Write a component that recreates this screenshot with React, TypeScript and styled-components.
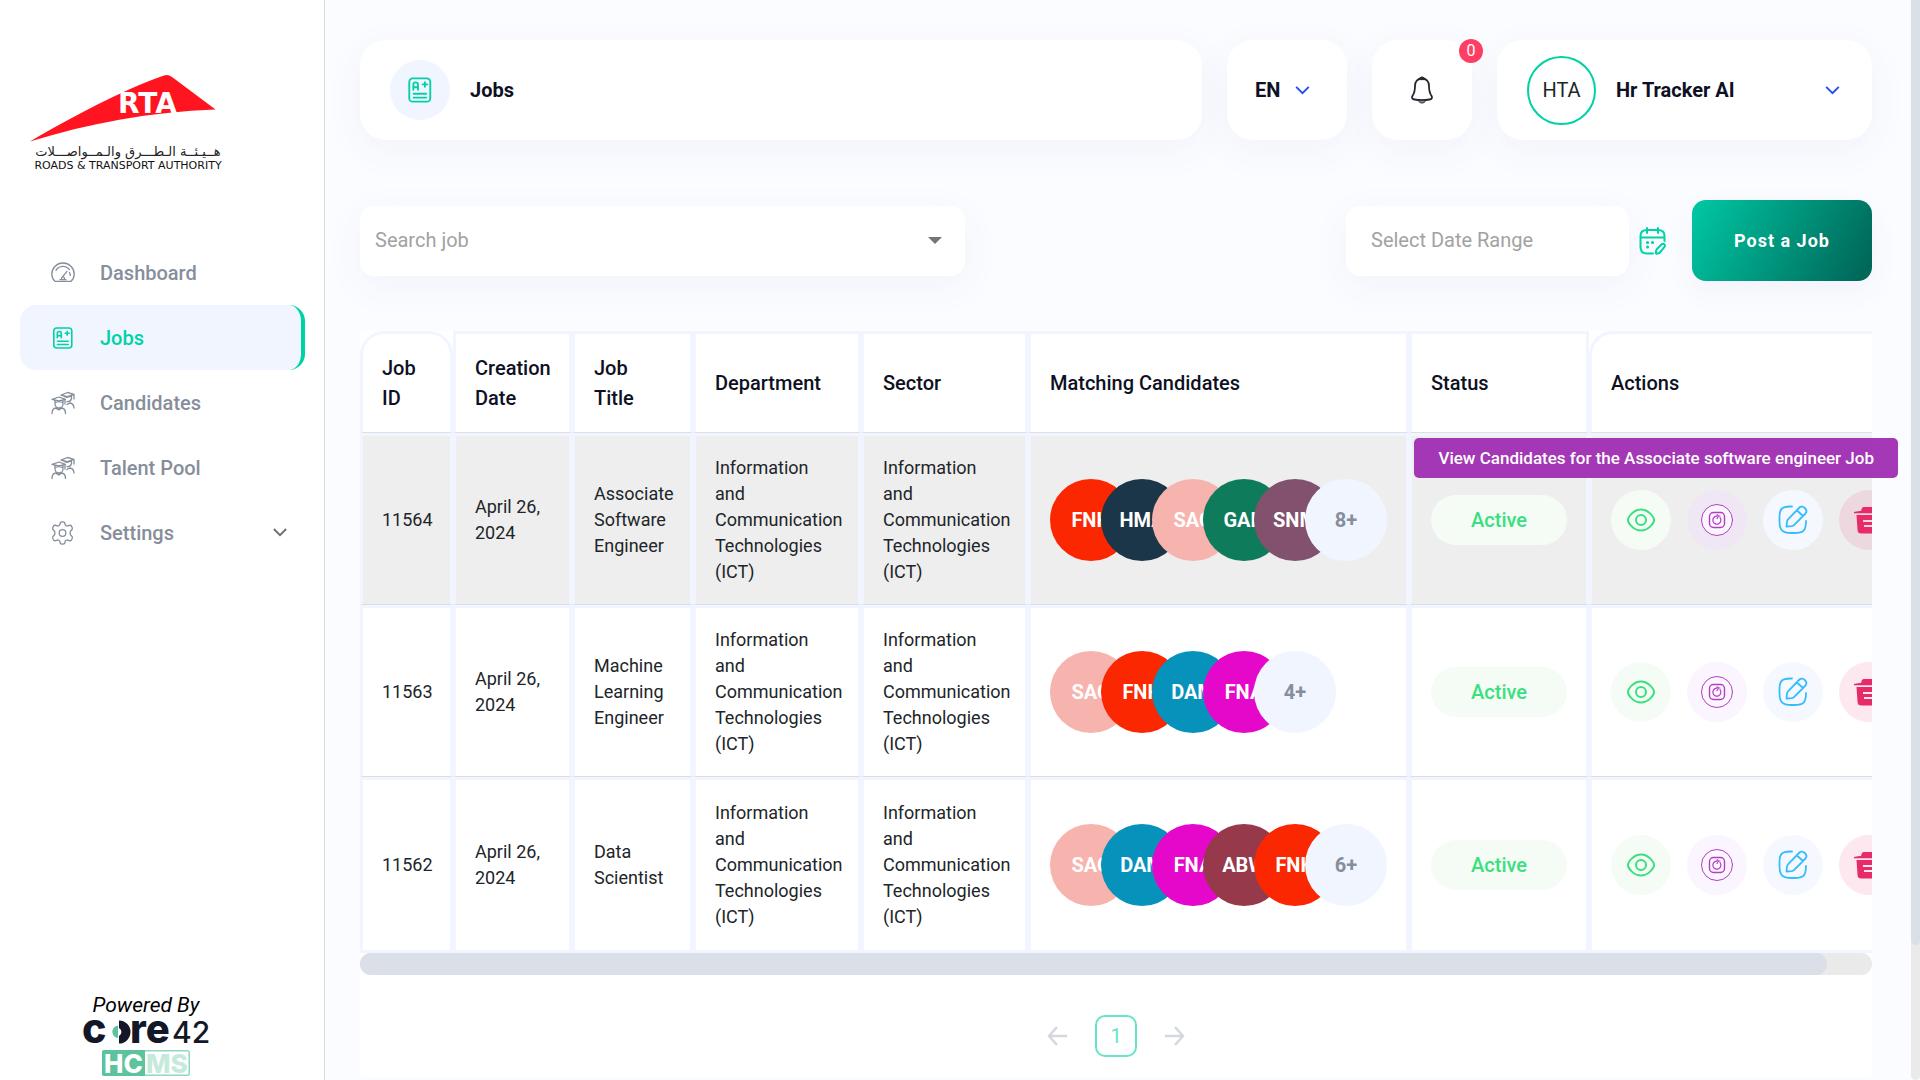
import React from "react";
import styled, { createGlobalStyle } from "styled-components";

const color = {
  ink: "#0e1123",
  body: "#212529",
  muted: "#868e9b",
  accent: "#00d2a6",
  tint: "#f0f5ff",
  page: "#fafcff",
  thumb: "#dadfe8",
  track: "#eaeaea",
};

const GlobalStyle = createGlobalStyle`
  *, *::before, *::after { box-sizing: border-box; }
  body {
    margin: 0;
    background: ${color.page};
    color: ${color.body};
    font-family: Roboto, "Noto Sans", sans-serif;
    font-size: 18px;
    line-height: 26px;
  }
  button, input { font: inherit; color: inherit; }
  button { border: 0; padding: 0; background: none; cursor: pointer; }
`;

/* ---------- shell ---------- */

const Shell = styled.div`
  display: flex;
  min-height: 100vh;
`;

const Sidebar = styled.aside`
  flex: 0 0 325px;
  display: flex;
  flex-direction: column;
  height: 100vh;
  position: sticky;
  top: 0;
  background: #fff;
  border-right: 1px solid #dadce2;
`;

const BrandLink = styled.a`
  display: block;
  padding: 70px 28px 0;
  height: 240px;
`;

const Nav = styled.nav`
  display: flex;
  flex-direction: column;
  padding: 0 19px 0 20px;
`;

const NavItem = styled.a<{ $active?: boolean }>`
  display: flex;
  align-items: center;
  gap: 25px;
  height: 65px;
  padding: 0 14px 0 31px;
  border-radius: 16px;
  border-right: 4px solid ${(p) => (p.$active ? color.accent : "transparent")};
  background: ${(p) => (p.$active ? color.tint : "transparent")};
  color: ${(p) => (p.$active ? color.accent : color.muted)};
  font-size: 20px;
  font-weight: 500;
  text-decoration: none;
`;

const NavLabel = styled.span`
  flex: 1;
`;

const Powered = styled.footer`
  display: flex;
  flex-direction: column;
  align-items: center;
  margin-top: auto;
  padding: 0 32px 4px 0;
  color: #000;
  font-size: 21px;
  font-style: italic;
  line-height: 26px;
`;

const Main = styled.main`
  flex: 1;
  min-width: 0;
  padding: 40px 48px 0 35px;
`;

const PageRail = styled.div`
  position: fixed;
  top: 0;
  right: 0;
  bottom: 0;
  width: 9px;
  background: ${color.track};
  border-radius: 5px;
`;

const PageThumb = styled.div`
  height: 87.5%;
  background: ${color.thumb};
  border-radius: 0 0 5px 5px;
`;

/* ---------- header ---------- */

const Header = styled.header`
  display: flex;
  gap: 25px;
`;

const HeaderCard = styled.div<{ $width?: number }>`
  ${(p) => (p.$width ? `flex: 0 0 ${p.$width}px;` : "flex: 1;")}
  display: flex;
  align-items: center;
  height: 100px;
  border-radius: 26px;
  background: #fff;
  box-shadow: 0 10px 40px rgba(80, 80, 160, 0.05);
`;

const TitleCard = styled(HeaderCard)`
  gap: 20px;
  padding: 0 30px;
`;

const TitleIcon = styled.span`
  display: grid;
  place-items: center;
  width: 60px;
  height: 60px;
  border-radius: 50%;
  background: ${color.tint};
  color: ${color.accent};
`;

const Title = styled.h1`
  margin: 0;
  color: ${color.ink};
  font-size: 20px;
  font-weight: 700;
`;

const HeaderButton = styled.button`
  display: flex;
  align-items: center;
  justify-content: center;
  width: 100%;
  height: 100%;
  color: ${color.ink};
  font-size: 20px;
  font-weight: 700;
`;

const LanguageButton = styled(HeaderButton)`
  justify-content: flex-start;
  gap: 15px;
  padding-left: 28px;
`;

const ProfileButton = styled(HeaderButton)`
  justify-content: flex-start;
  gap: 20px;
  padding: 0 32px 0 30px;
`;

const ProfileName = styled.span`
  flex: 1;
  text-align: left;
`;

const Initials = styled.span`
  display: grid;
  place-items: center;
  width: 69px;
  height: 69px;
  border: 2px solid ${color.accent};
  border-radius: 50%;
  color: ${color.body};
  font-weight: 400;
`;

const BellCard = styled(HeaderCard)`
  position: relative;
`;

const Badge = styled.span`
  position: absolute;
  top: -1px;
  right: -11px;
  width: 24px;
  height: 24px;
  border-radius: 50%;
  background: #ff3e66;
  color: #fff;
  font-size: 16px;
  line-height: 24px;
  text-align: center;
`;

/* ---------- filters ---------- */

const Filters = styled.form`
  display: flex;
  align-items: center;
  justify-content: space-between;
  margin-top: 60px;
`;

const Field = styled.label<{ $width: string }>`
  display: flex;
  align-items: center;
  width: ${(p) => p.$width};
  height: 70px;
  border-radius: 14px;
  background: #fff;
  box-shadow: 0 10px 40px rgba(80, 80, 160, 0.05);
`;

const SearchField = styled(Field)`
  padding: 0 23px 0 15px;
`;

const DateField = styled(Field)`
  padding: 0 25px;
`;

const TextInput = styled.input`
  flex: 1;
  min-width: 0;
  padding: 0 0 2px;
  border: 0;
  outline: 0;
  background: none;
  font-size: 20px;
  &::placeholder {
    color: #a2a2a2;
    opacity: 1;
  }
`;

const FilterActions = styled.div`
  display: flex;
  align-items: center;
`;

const CalendarButton = styled.button`
  display: grid;
  margin: 0 25px 0 10px;
  color: ${color.accent};
`;

const PostButton = styled.button`
  width: 180px;
  height: 81px;
  border-radius: 14px;
  background: linear-gradient(118deg, #00c3a0 5%, #006759 95%);
  box-shadow: 0 10px 30px rgba(80, 80, 160, 0.05);
  color: #fff;
  font-weight: 700;
  letter-spacing: 1px;
`;

/* ---------- table ---------- */

const TableCard = styled.section`
  position: relative;
  margin-top: 50px;
  padding-bottom: 20px;
  border-radius: 4px;
  background: #fff;
`;

const TableClip = styled.div`
  overflow: hidden;
`;

const Table = styled.table`
  width: 1560px;
  table-layout: fixed;
  border-spacing: 0;
`;

const HeadCell = styled.th<{ $round?: boolean }>`
  height: 102px;
  padding: 19px;
  border: 3px solid ${color.tint};
  border-bottom: 1px solid #dfdfdf;
  border-radius: ${(p) => (p.$round ? "24px 24px 0 0" : "0")};
  color: ${color.ink};
  font-size: 20px;
  font-weight: 500;
  line-height: 30px;
  text-align: left;
`;

const Cell = styled.td`
  height: 172px;
  padding: 19px;
  border: 3px solid ${color.tint};
  border-bottom: 1px solid #dadee2;
`;

const Row = styled.tr<{ $hover?: boolean }>`
  background: ${(p) => (p.$hover ? "#eeeeee" : "#fff")};
  &:last-child ${Cell} {
    height: 176px;
    border-bottom: 3px solid ${color.tint};
  }
`;

const Stack = styled.div`
  display: flex;
`;

const Avatar = styled.span<{ $bg: string; $fg?: string }>`
  flex: 0 0 82px;
  height: 82px;
  margin-right: -31px;
  border-radius: 50%;
  background: ${(p) => p.$bg};
  color: ${(p) => p.$fg ?? "#fff"};
  font-size: 20px;
  font-weight: 700;
  line-height: 82px;
  text-align: center;
`;

const Status = styled.span`
  display: block;
  height: 50px;
  border-radius: 25px;
  background: #f4fcf5;
  color: #3ae07f;
  font-size: 20px;
  font-weight: 500;
  line-height: 50px;
  text-align: center;
`;

const Actions = styled.div`
  display: flex;
  gap: 16px;
`;

const ActionButton = styled.button<{ $bg: string; $fg: string }>`
  display: grid;
  flex: 0 0 60px;
  place-items: center;
  height: 60px;
  border-radius: 50%;
  background: ${(p) => p.$bg};
  color: ${(p) => p.$fg};
`;

const Tooltip = styled.div`
  position: absolute;
  top: 107px;
  right: -26px;
  padding: 7px 24px;
  border-radius: 5px;
  background: rgba(156, 39, 176, 0.92);
  color: #fff;
  font-size: 17px;
  font-weight: 500;
  white-space: nowrap;
`;

const ScrollTrack = styled.div`
  height: 22px;
  border-radius: 11px;
  background: ${color.track};
`;

const ScrollThumb = styled.div`
  width: 97%;
  height: 22px;
  border-radius: 11px;
  background: ${color.thumb};
`;

const Pager = styled.nav`
  display: flex;
  align-items: center;
  justify-content: center;
  gap: 28px;
  margin-top: 40px;
  color: #d4d7dd;
`;

const PagerArrow = styled.button`
  display: grid;
`;

const PageNumber = styled.button`
  width: 42px;
  height: 42px;
  border: 2px solid #66e4ca;
  border-radius: 10px;
  color: #66e4ca;
  font-size: 20px;
`;

/* ---------- drawings ---------- */

const line = {
  fill: "none",
  stroke: "currentColor",
  strokeLinecap: "round" as const,
  strokeLinejoin: "round" as const,
};

const RtaLogo = () => (
  <svg width="200" height="104" viewBox="28 70 200 104" overflow="visible" role="img" aria-label="RTA Roads and Transport Authority">
    <path d="M30 141.500C70 118 120 91 164 75.500Q168 74 172 77L215.500 109.500C150 112 90 123 30 141.500Z" fill="#ff1420" />
    <text x="118" y="113" fontFamily="DejaVu Sans, sans-serif" fontSize="28" fontWeight="700" fill="#fff">RTA</text>
    <text x="128" y="156" textAnchor="middle" fontFamily="DejaVu Sans, sans-serif" fontSize="13" fill="#222" direction="rtl">هــيـئــة الـطـــرق والـمــواصـــلات</text>
    <text x="128" y="169" textAnchor="middle" fontFamily="DejaVu Sans, sans-serif" fontSize="11" fill="#111">ROADS &amp; TRANSPORT AUTHORITY</text>
  </svg>
);

const CoreLogo = () => (
  <svg width="128" height="58" viewBox="82 1018 128 58" overflow="visible" role="img" aria-label="core42 HCMS" fontStyle="normal">
    <g fill="#131728" fontFamily="Inter, sans-serif">
      <text x="82" y="1043" fontSize="41" fontWeight="800">c</text>
      <path d="M119 1020.500a11.500 11.500 0 0 1 0 23v-7.500a4.500 4.500 0 0 0 0-8z" />
      <text x="130" y="1043" fontSize="40" fontWeight="800">re</text>
      <text x="172" y="1043" fontSize="30" fontWeight="500">42</text>
    </g>
    <path d="M118 1025.500v12.500a6.500 6.300 0 0 1 0-12.500z" fill="#5cc39d" />
    <rect x="102.750" y="1050.750" width="86.500" height="24.500" rx="2" fill="#fff" stroke="#8fd8bd" strokeWidth="1.500" />
    <path d="M104 1050h41v26h-41a2 2 0 0 1-2-2v-22a2 2 0 0 1 2-2z" fill="#5cc39d" />
    <g fontFamily="Inter, sans-serif" fontSize="26" fontWeight="800">
      <text x="104" y="1072.500" fill="#fff">HC</text>
      <text x="146" y="1072.500" fill="#c4eadb">MS</text>
    </g>
  </svg>
);

const GaugeIcon = () => (
  <svg width="24" height="24" viewBox="0 0 24 24" {...line} strokeWidth="1.300">
    <path d="M4 20.300C2 18.500.8 16 .8 13.200a11.200 11.200 0 0 1 22.400 0c0 2.800-1.200 5.300-3.200 7.100z" />
    <path d="M5 9.500a8 8 0 0 1 13.500-.8M9 18.700h6M11.300 16.200 16 10.300M11 18.500a1.500 1.500 0 1 1 2 0M18.500 11.500a8 8 0 0 1 .8 3" />
  </svg>
);

const ResumeIcon = ({ size = 24 }: { size?: number }) => (
  <svg width={size} height={size} viewBox="0 0 24 24" {...line} strokeWidth="1.600">
    <rect x="2.800" y="2" width="18" height="20" rx="3" />
    <path d="M6.300 11.800V7.500a2 2 0 0 1 4 0v4.300M6.300 9.600h4M14.200 7.200h4M16.200 5.200v4M6.500 15.200h10.800M6.500 18.500h10.800" />
  </svg>
);

const GraduatesIcon = () => (
  <svg width="24" height="24" viewBox="0 0 24 24" {...line} strokeWidth="1.300">
    <path d="M1 8.300 8 6l6.500 2.300L8 10zM4 9.500v3.500a4 4 0 0 0 8 0V9.500M4.300 11.500c2-.9 5.400-.9 7.400 0M14 8.500V13" />
    <path d="M1 22.500c0-3 1.200-5 3.500-5.500l3.300 2 3.200-2c2.200.6 3.500 2.500 3.500 5.500M6 16.500l1.800 2.400 1.700-2.400" />
    <path d="M10 4.200 16.500 1.500 23 3.300l-6.500 2.400zM23 3.500V8M20.500 4.700V7.500a4 4 0 0 1-4.500 3M13 5.500l3 .9 4-1.200M16 13.500c1.300-1 2-1.500 3.200-1.500 2.300.5 3.600 2.300 3.800 5" />
  </svg>
);

const GearIcon = () => (
  <svg width="24" height="24" viewBox="0 0 24 24" {...line} strokeWidth="1.300">
    <circle cx="11.500" cy="12" r="3.300" />
    <path d="M9 3.200C9 1.600 9.800.8 11 .8h1c1.200 0 2 .8 2 2.400.4 1.500 1.800 2.200 3.300 1.500 1.500-.7 2.500-.6 3.200.5l.7 1.300c.6 1.200.2 2-1 2.900-1.500 1-1.500 4.200 0 5.200 1.200.9 1.600 1.700 1 2.900l-.7 1.300c-.7 1.100-1.700 1.200-3.200.5s-2.900 0-3.300 1.500c0 1.600-.8 2.400-2 2.400h-1c-1.200 0-2-.8-2-2.400-.4-1.500-1.800-2.200-3.300-1.500s-2.500.6-3.200-.5l-.7-1.300c-.6-1.200-.2-2 1-2.900 1.500-1 1.500-4.200 0-5.200-1.200-.9-1.600-1.700-1-2.900l.7-1.300c.7-1.100 1.700-1.200 3.200-.5s2.900 0 3.300-1.500z" />
  </svg>
);

const Chevron = ({ stroke, width = 15 }: { stroke: string; width?: number }) => (
  <svg width={width} height="9" viewBox="0 0 16 10" fill="none" stroke={stroke} strokeWidth="2.200">
    <path d="M1 1l7 7 7-7" />
  </svg>
);

const BellIcon = () => (
  <svg width="24" height="28" viewBox="0 0 24 28" {...line} strokeWidth="1.800" color="#24272f">
    <path d="M12 2.500c4.500 0 7 3.300 7 7.500 0 6 .8 7.500 2.600 10 1.200 2-.2 3.200-2.100 3.500-5 .7-10 .7-15 0-1.900-.3-3.300-1.500-2.100-3.500C4.200 17.500 5 16 5 10c0-4.200 2.500-7.500 7-7.500z" />
    <path d="M8.500 3.300C9.500 2 10.700 1 12 1s2.500 1 3.500 2.300z" fill="currentColor" strokeWidth="1" />
    <path d="M8 24.500c1 1.600 2.400 2.500 4 2.500s3-.9 4-2.500z" fill="#8c8f96" strokeWidth="1" />
  </svg>
);

const CalendarIcon = () => (
  <svg width="28" height="28" viewBox="0 0 28 28" {...line} strokeWidth="2">
    <path d="M14 26.500H8c-4.500 0-6.500-2-6.500-6.500V9c0-4 2-6 6.500-6h11c4.500 0 6.500 2 6.500 6v5M2 10.500h23M8 1v5M19 1v5" />
    <path d="m17.500 22.500 5.500-5.500c1.300-1 3.800 1 2.700 2.700L20.500 26l-3 .8-.7-.8z" />
    <path d="M8.500 15.500h.1M13.500 15.500h.1M8.500 20h.1" strokeWidth="3" />
  </svg>
);

const EyeIcon = () => (
  <svg width="30" height="30" viewBox="0 0 30 30" {...line} strokeWidth="2">
    <path d="M2 15C2 12 7.500 4.500 15 4.500S28 12 28 15 22.500 25.500 15 25.500 2 18 2 15z" />
    <circle cx="15" cy="15" r="5" />
  </svg>
);

const TargetIcon = () => (
  <svg width="32" height="32" viewBox="0 0 32 32" {...line} strokeWidth="1">
    <circle cx="16" cy="16" r="15.500" fill="#fbf6ff" />
    <rect x="8.500" y="8.500" width="15" height="15" rx="4" strokeWidth="1.400" />
    <path d="M15.500 12.200a4 4 0 1 0 3.500 1.500M16 14.500l1.500-2.500L16 10.800M17.500 12h1.500" strokeWidth="1.200" />
  </svg>
);

const EditIcon = () => (
  <svg width="32" height="32" viewBox="0 0 32 32" {...line} strokeWidth="1.800">
    <path d="M15 2.500h-2C5 2.500 2.500 5 2.500 13v4c0 9 2.500 12 12 12h3c9 0 11.500-2.500 11.500-12" />
    <path d="m9.500 22.500.5-5c.1-1 .5-1.700 1.200-2.400L22.500 3.500c3-3.200 9 2.500 6 6L17 21.200c-.6.600-1.200.9-2.200 1zM20 6.500l6 5.500" />
  </svg>
);

const TrashIcon = () => (
  <svg width="30" height="30" viewBox="0 0 30 30" fill="currentColor">
    <path d="M0 7c3-.9 6-1 7-1l.6-2c.4-1.500 1.400-2 3-2h7.800c1.600 0 2.600.5 3 2l.6 2c1 0 5 .1 8 1v1.200H0z" />
    <path fillRule="evenodd" d="M2.500 10h24l-1 14.500c-.2 3-1.200 4-4 4h-14c-2.800 0-3.800-1-4-4zM9 15v2h11v-2zm1 5v2h9v-2z" />
  </svg>
);

const ArrowIcon = ({ d }: { d: string }) => (
  <svg width="20" height="20" viewBox="0 0 20 20" fill="none" stroke="currentColor" strokeWidth="2.400">
    <path d={d} />
  </svg>
);

/* ---------- data ---------- */

type Person = [initials: string, background: string];

const nav = [
  { label: "Dashboard", icon: <GaugeIcon /> },
  { label: "Jobs", icon: <ResumeIcon />, active: true },
  { label: "Candidates", icon: <GraduatesIcon /> },
  { label: "Talent Pool", icon: <GraduatesIcon /> },
  { label: "Settings", icon: <GearIcon />, expandable: true },
];

const columns = [
  { label: "Job ID", width: 93 },
  { label: "Creation Date", width: 119 },
  { label: "Job Title", width: 121 },
  { label: "Department", width: 168 },
  { label: "Sector", width: 167 },
  { label: "Matching Candidates", width: 381 },
  { label: "Status", width: 180 },
  { label: "Actions", width: 331 },
];

const ict = "Information and Communication Technologies (ICT)";
const red = "#fb2700";
const pink = "#f7b4ae";
const blue = "#0792bb";
const magenta = "#e508cb";

const jobs: { id: number; title: string; people: Person[]; more: number; hover?: boolean }[] = [
  {
    id: 11564,
    title: "Associate Software Engineer",
    people: [["FNH", red], ["HMA", "#1b3648"], ["SAG", pink], ["GAN", "#0e7c5a"], ["SNM", "#81516d"]],
    more: 8,
    hover: true,
  },
  {
    id: 11563,
    title: "Machine Learning Engineer",
    people: [["SAG", pink], ["FNH", red], ["DAM", blue], ["FNA", magenta]],
    more: 4,
  },
  {
    id: 11562,
    title: "Data Scientist",
    people: [["SAG", pink], ["DAM", blue], ["FNA", magenta], ["ABW", "#96394b"], ["FNH", red]],
    more: 6,
  },
];

export default function App() {
  return (
    <>
      <GlobalStyle />
      <Shell>
        <Sidebar>
          <BrandLink href="#home"><RtaLogo /></BrandLink>
          <Nav aria-label="Main">
            {nav.map((item) => (
              <NavItem key={item.label} href={`#${item.label}`} $active={item.active}>
                {item.icon}
                <NavLabel>{item.label}</NavLabel>
                {item.expandable && <Chevron stroke="#6f6f74" width={14} />}
              </NavItem>
            ))}
          </Nav>
          <Powered>
            Powered By
            <CoreLogo />
          </Powered>
        </Sidebar>

        <Main>
          <Header>
            <TitleCard>
              <TitleIcon><ResumeIcon size={28} /></TitleIcon>
              <Title>Jobs</Title>
            </TitleCard>
            <HeaderCard $width={120}>
              <LanguageButton type="button">EN <Chevron stroke="#2152f3" /></LanguageButton>
            </HeaderCard>
            <BellCard $width={100}>
              <HeaderButton type="button" aria-label="Notifications"><BellIcon /></HeaderButton>
              <Badge>0</Badge>
            </BellCard>
            <HeaderCard $width={375}>
              <ProfileButton type="button">
                <Initials>HTA</Initials>
                <ProfileName>Hr Tracker AI</ProfileName>
                <Chevron stroke="#2152f3" />
              </ProfileButton>
            </HeaderCard>
          </Header>

          <Filters>
            <SearchField $width="40%">
              <TextInput type="text" placeholder="Search job" aria-label="Search job" />
              <svg width="14" height="7" viewBox="0 0 14 7" fill="#757575"><path d="M0 0h14L7 7z" /></svg>
            </SearchField>
            <FilterActions>
              <DateField $width="283px">
                <TextInput type="text" placeholder="Select Date Range" aria-label="Select Date Range" />
              </DateField>
              <CalendarButton type="button" aria-label="Pick dates"><CalendarIcon /></CalendarButton>
              <PostButton type="button">Post a Job</PostButton>
            </FilterActions>
          </Filters>

          <TableCard>
            <TableClip>
              <Table>
                <colgroup>
                  {columns.map((c) => <col key={c.label} style={{ width: c.width }} />)}
                </colgroup>
                <thead>
                  <tr>
                    {columns.map((c, i) => (
                      <HeadCell key={c.label} scope="col" $round={i === 0 || i === columns.length - 1}>
                        {c.label}
                      </HeadCell>
                    ))}
                  </tr>
                </thead>
                <tbody>
                  {jobs.map((job) => (
                    <Row key={job.id} $hover={job.hover}>
                      <Cell>{job.id}</Cell>
                      <Cell>April 26, 2024</Cell>
                      <Cell>{job.title}</Cell>
                      <Cell>{ict}</Cell>
                      <Cell>{ict}</Cell>
                      <Cell>
                        <Stack>
                          {job.people.map(([initials, bg]) => (
                            <Avatar key={initials} $bg={bg}>{initials}</Avatar>
                          ))}
                          <Avatar $bg={color.tint} $fg={color.muted}>{job.more}+</Avatar>
                        </Stack>
                      </Cell>
                      <Cell><Status>Active</Status></Cell>
                      <Cell>
                        <Actions>
                          <ActionButton type="button" aria-label="View" $bg="#f4fcf5" $fg="#3ae07f"><EyeIcon /></ActionButton>
                          <ActionButton type="button" aria-label="Match" $bg={job.hover ? "#efe8f4" : "#faf5ff"} $fg="#b23fc0"><TargetIcon /></ActionButton>
                          <ActionButton type="button" aria-label="Edit" $bg="#f5f9ff" $fg="#35bcff"><EditIcon /></ActionButton>
                          <ActionButton type="button" aria-label="Delete" $bg="rgba(233, 30, 99, 0.1)" $fg="#e82a68"><TrashIcon /></ActionButton>
                        </Actions>
                      </Cell>
                    </Row>
                  ))}
                </tbody>
              </Table>
            </TableClip>
            <ScrollTrack><ScrollThumb /></ScrollTrack>
            <Pager aria-label="Pages">
              <PagerArrow type="button" aria-label="Previous"><ArrowIcon d="M20 10H2M10 1l-8 9 8 9" /></PagerArrow>
              <PageNumber type="button">1</PageNumber>
              <PagerArrow type="button" aria-label="Next"><ArrowIcon d="M0 10h18M10 1l8 9-8 9" /></PagerArrow>
            </Pager>
            <Tooltip role="tooltip">View Candidates for the Associate software engineer Job</Tooltip>
          </TableCard>
        </Main>
      </Shell>
      <PageRail><PageThumb /></PageRail>
    </>
  );
}
